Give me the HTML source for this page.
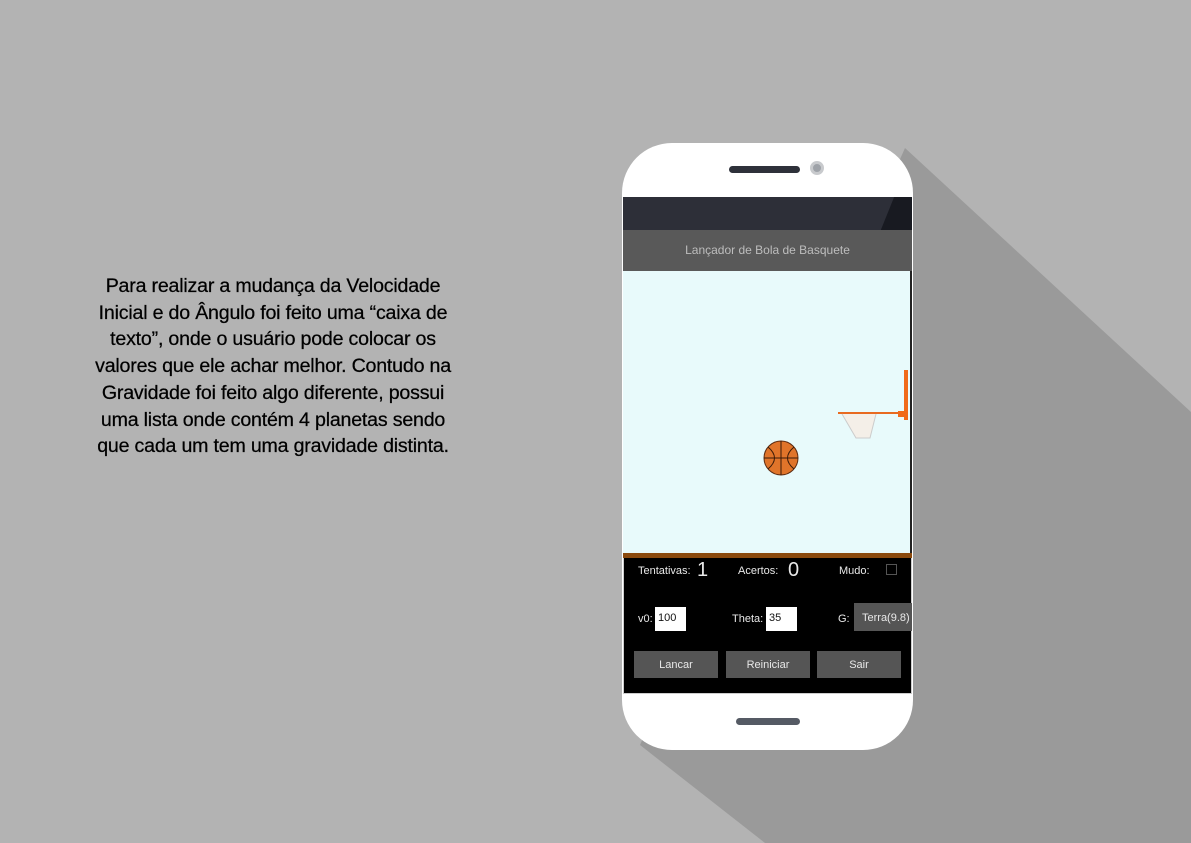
<!DOCTYPE html>
<html><head><meta charset="utf-8"><style>
*{margin:0;padding:0;box-sizing:border-box}
body{width:1191px;height:843px;background:#b3b3b3;position:relative;overflow:hidden;font-family:"Liberation Sans",sans-serif}
.txt{position:absolute;left:40px;width:466px;top:273px;text-align:center;font-size:19.6px;line-height:26.7px;color:#000;letter-spacing:-0.2px;-webkit-text-stroke:0.25px #000}
.a{position:absolute}
</style></head><body>
<svg class="a" style="left:0;top:0" width="1191" height="843"><polygon points="905,148 1191,412 1191,843 765,843 640,745" fill="#9a9a9a"/></svg>
<div class="txt">Para realizar a mudança da Velocidade<br>Inicial e do Ângulo foi feito uma “caixa de<br>texto”, onde o usuário pode colocar os<br>valores que ele achar melhor. Contudo na<br>Gravidade foi feito algo diferente, possui<br>uma lista onde contém 4 planetas sendo<br>que cada um tem uma gravidade distinta.</div>
<div class="a" style="left:622px;top:143px;width:291px;height:607px;background:#fff;border-radius:50px"></div>
<div class="a" style="left:729px;top:166px;width:71px;height:7px;background:#2e313a;border-radius:4px"></div>
<div class="a" style="left:810px;top:161px;width:14px;height:14px;background:#9ea2a8;border-radius:50%;border:3px solid #c8cacd"></div>
<div class="a" style="left:623px;top:197px;width:289px;height:33px;background:#2d2f38;overflow:hidden"><div style="position:absolute;left:255px;top:0;width:60px;height:40px;background:#181a21;transform:skewX(-22deg);transform-origin:0 100%"></div></div>
<div class="a" style="left:623px;top:230px;width:289px;height:41px;background:#595959;color:#bdbdbd;font-size:12px;text-align:center;line-height:40px">Lançador de Bola de Basquete</div>
<div class="a" style="left:623px;top:271px;width:289px;height:282px;background:#e8fafb;border-right:2px solid #222"></div>
<div class="a" style="left:904px;top:370px;width:4px;height:50px;background:#f06a1a"></div>
<svg class="a" style="left:838px;top:410px" width="72" height="32"><path d="M0 3 H68" stroke="#e86a20" stroke-width="2"/><path d="M4 4 L18 28 H32 L38 4" fill="#f4efe8" stroke="#ccc" stroke-width="1"/><rect x="60" y="1" width="8" height="6" fill="#f06a1a"/></svg>
<svg class="a" style="left:762px;top:439px" width="38" height="38"><circle cx="19" cy="19" r="17" fill="#e0742a" stroke="#5a2a10"/><path d="M2 19 H36 M19 2 V36 M6 8 Q19 19 6 30 M32 8 Q19 19 32 30" stroke="#3a1a08" fill="none" stroke-width="1"/></svg>
<div class="a" style="left:623px;top:553px;width:289px;height:5px;background:#8b4a0e"></div>
<div class="a" style="left:623px;top:558px;width:289px;height:136px;background:#000;border:1px solid #ccc;border-top:none;color:#e8e8e8;font-size:11px">
<div class="a" style="left:14px;top:7px">Tentativas:</div><div class="a" style="left:73px;top:1px;font-size:20px">1</div>
<div class="a" style="left:114px;top:7px">Acertos:</div><div class="a" style="left:164px;top:1px;font-size:20px">0</div>
<div class="a" style="left:215px;top:7px">Mudo:</div><div class="a" style="left:262px;top:6px;width:11px;height:11px;border:1px solid #555"></div>
<div class="a" style="left:14px;top:55px">v0:</div><div class="a" style="left:31px;top:49px;width:31px;height:24px;background:#fff;color:#111;padding:5px 3px">100</div>
<div class="a" style="left:108px;top:55px">Theta:</div><div class="a" style="left:142px;top:49px;width:31px;height:24px;background:#fff;color:#111;padding:5px 3px">35</div>
<div class="a" style="left:214px;top:55px">G:</div><div class="a" style="left:230px;top:45px;width:58px;height:28px;background:#555;padding:9px 0 0 8px">Terra(9.8)</div>
<div class="a" style="left:10px;top:93px;width:84px;height:27px;background:#555;text-align:center;line-height:28px">Lancar</div>
<div class="a" style="left:102px;top:93px;width:84px;height:27px;background:#555;text-align:center;line-height:28px">Reiniciar</div>
<div class="a" style="left:193px;top:93px;width:84px;height:27px;background:#555;text-align:center;line-height:28px">Sair</div>
</div>
<div class="a" style="left:736px;top:718px;width:64px;height:7px;background:#555a64;border-radius:4px"></div>
</body></html>
